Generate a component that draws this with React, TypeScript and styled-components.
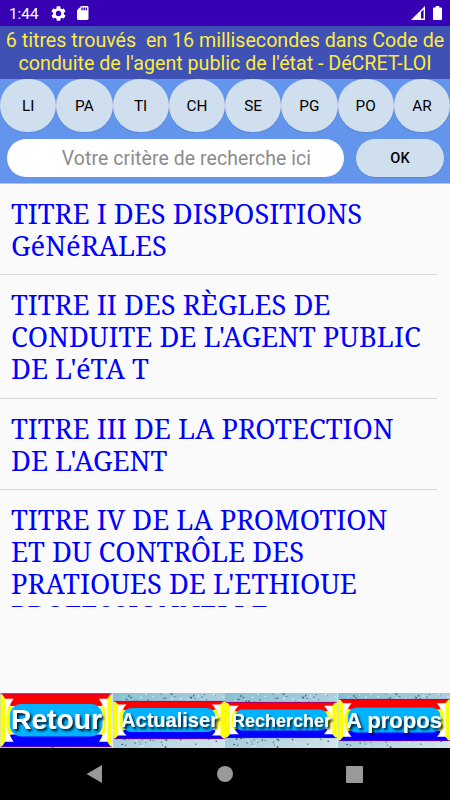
import React from 'react';
import styled, { createGlobalStyle } from 'styled-components';

const Global = createGlobalStyle`
  * { box-sizing: border-box; }
  body { margin: 0; background: #fafafa; }
`;

const Screen = styled.div`
  width: 450px;
  height: 800px;
  display: flex;
  flex-direction: column;
  overflow: hidden;
  background: #fafafa;
  font-family: Roboto, sans-serif;
`;

const StatusBar = styled.div`
  flex: none;
  height: 26px;
  background: #3700b3;
  color: #fff;
  display: flex;
  align-items: center;
  padding: 0 8px 0 9px;
  font-size: 15.3px;
  svg { display: block; }
`;
const Clock = styled.span`
  width: 42px;
  line-height: 18px;
  padding-top: 1px;
`;
const StatusIcons = styled.div<{ $gap: number; $end?: boolean }>`
  display: flex;
  align-items: center;
  gap: ${(p) => p.$gap}px;
  margin-left: ${(p) => (p.$end ? 'auto' : '0')};
`;

const Banner = styled.header`
  flex: none;
  height: 53px;
  overflow: hidden;
  background: #3f51b5;
  color: #ffeb3b;
  padding-top: 3px;
  font-size: 19.65px;
  line-height: 23px;
  text-align: center;
  white-space: pre;
`;

const Controls = styled.section`
  flex: none;
  height: 105px;
  background: #6495ed;
  border-bottom: 1px solid #a9c4f4;
`;
const Filters = styled.div`
  display: grid;
  grid-template-columns: repeat(8, 56.25px);
  height: 53px;
`;
const Pill = styled.button`
  border: 0;
  padding: 0;
  background: #d0dfee;
  color: #000;
  border-radius: 27px;
  font: 500 14.6px Roboto, sans-serif;
  box-shadow: 0 1px 1px rgba(40, 70, 130, 0.18);
`;
const FilterPill = styled(Pill)`
  height: 52.5px;
  padding-top: 1px;
  font-weight: 400;
  font-size: 15.3px;
`;
const SearchRow = styled.div`
  display: flex;
  padding: 7px 6px 0 7px;
  gap: 12px;
`;
const SearchInput = styled.input`
  width: 337px;
  height: 38px;
  border: 0;
  border-radius: 19px;
  outline: 0;
  background: #fff;
  padding: 1px 0 0 22px;
  text-align: center;
  font: 400 19.4px Roboto, sans-serif;
  letter-spacing: 0.11px;
  &::placeholder { color: #8b8b8b; opacity: 1; }
`;
const OkButton = styled(Pill)`
  width: 88px;
  height: 38px;
`;

const Results = styled.ul`
  flex: none;
  height: 423px;
  margin: 0;
  padding: 0;
  list-style: none;
  overflow: hidden;
`;
const Result = styled.li<{ $height: number }>`
  width: 437px;
  height: ${(p) => p.$height}px;
  padding: 13.5px 0 0 11px;
  border-bottom: 1.5px solid #d7d7d7;
  color: #0000ff;
  font-family: 'Noto Serif', 'DejaVu Serif Condensed', 'DejaVu Serif', serif;
  font-stretch: condensed;
  font-size: 27.36px;
  line-height: 32px;
  white-space: pre;
`;

const Spacer = styled.div`
  flex: 1;
`;
const Actions = styled.nav`
  flex: none;
  display: grid;
  grid-template-columns: repeat(4, 112.5px);
  height: 55px;
`;
const Action = styled.button`
  border: 0;
  padding: 0;
  background: none;
  svg { display: block; }
`;
const SystemNav = styled.footer`
  flex: none;
  height: 52px;
  background: #000;
  display: flex;
  justify-content: space-between;
  align-items: center;
  padding: 0 87px 0 86px;
`;

const results = [
  { height: 91, lines: ['TITRE I DES DISPOSITIONS', 'GéNéRALES'] },
  { height: 124, lines: ['TITRE II DES RÈGLES DE', "CONDUITE DE L'AGENT PUBLIC", "DE L'éTA T"] },
  { height: 91, lines: ['TITRE III DE LA PROTECTION', "DE L'AGENT"] },
  { height: 150, lines: ['TITRE IV DE LA PROMOTION', 'ET DU CONTRÔLE DES', "PRATIOUES DE L'ETHIOUE", 'PROFESSIONNELLE'] },
];

const noise = (n: number) => {
  const v = Math.sin(n * 127.1 + 11.7) * 43758.5453;
  return v - Math.floor(v);
};
const specks = Array.from({ length: 210 }, (_, i) => ({
  x: noise(i) * 112,
  y: noise(i + 500) * 55,
  r: 0.35 + noise(i + 900) * 0.5,
  dark: i % 5 < 3,
}));

interface FrameProps {
  label: string;
  top: number;
  bottom: number;
  band: number;
  size: number;
  baseline: number;
  width: number;
  x: number;
}

function FrameButton({ label, top, bottom, band, size, baseline, width, x }: FrameProps) {
  const id = label.replace(' ', '');
  const l = 0.6;
  const r = 111.9;
  const it = top + band;
  const ib = bottom - band;
  const edge = band * 0.5;
  return (
    <Action aria-label={label}>
      <svg width="112.5" height="55" viewBox="0 0 112.5 55">
        <defs>
          <linearGradient id={`w${id}`} x1="0" y1="0" x2="1" y2="1">
            <stop offset="0" stopColor="#86bfd0" />
            <stop offset="0.5" stopColor="#a9cddd" />
            <stop offset="1" stopColor="#d3e5e8" />
          </linearGradient>
          <filter id={`s${id}`} x="-10%" y="-20%" width="125%" height="160%">
            <feDropShadow dx="2" dy="2.2" stdDeviation="1.1" floodColor="#001428" floodOpacity="0.95" />
          </filter>
        </defs>
        <rect width="112.5" height="55" fill={`url(#w${id})`} />
        {specks.map((s, i) => (
          <ellipse key={i} cx={s.x} cy={s.y} rx={s.r * 1.3} ry={s.r} fill={s.dark ? '#1f3f4c' : '#f2fafa'} opacity="0.75" />
        ))}
        <rect x={l} y={top} width={r - l} height={bottom - top} fill="#fff" />
        <path d={`M${l} ${top}L${l + 4.5} ${top + edge}V${bottom - edge}L${l} ${bottom}ZM${r} ${top}L${r - 4.5} ${top + edge}V${bottom - edge}L${r} ${bottom}Z`} fill="#ffff00" />
        <path d={`M${l + 1} ${top}H${r - 1}L${r - 4.5} ${top + edge}H${r - 13}Q${r - 10} ${it - 1} ${r - 9} ${it + 2}H${l + 9}Q${l + 10} ${it - 1} ${l + 13} ${top + edge}H${l + 4.5}Z`} fill="#ff0000" />
        <path d={`M${l + 1} ${bottom}H${r - 1}L${r - 4.5} ${bottom - edge}H${r - 13}Q${r - 10} ${ib + 1} ${r - 9} ${ib - 2}H${l + 9}Q${l + 10} ${ib + 1} ${l + 13} ${bottom - edge}H${l + 4.5}Z`} fill="#0000ff" />
        <path d={`M${l} ${top + 0.4}H${r}M${l} ${bottom - 0.4}H${r}`} stroke="#8000a0" strokeWidth="0.7" />
        <path d={`M11 ${it + 2}C7 ${it + 6} 7 ${ib - 6} 11 ${ib - 2}M101.5 ${it + 2}C105.5 ${it + 6} 105.5 ${ib - 6} 101.5 ${ib - 2}`} fill="none" stroke="#ffff00" strokeWidth="3.5" />
        <rect x="9.8" y={it} width="92.7" height={ib - it} rx={Math.min(12, (ib - it) / 2.8)} fill="#00b2ff" />
        <text
          x={x}
          y={baseline}
          textLength={width}
          lengthAdjust="spacingAndGlyphs"
          fontFamily="'Liberation Sans', Arial, sans-serif"
          fontWeight="700"
          fontSize={size}
          fill="#fff"
          filter={`url(#s${id})`}
        >
          {label}
        </text>
      </svg>
    </Action>
  );
}

export default function App() {
  return (
    <>
      <Global />
      <Screen>
        <StatusBar>
          <Clock>1:44</Clock>
          <StatusIcons $gap={11}>
            <svg width="15" height="15" viewBox="2 2 20 20" fill="#fff">
              <path d="M19.14 12.94c.04-.3.06-.61.06-.94 0-.32-.02-.64-.07-.94l2.03-1.58a.49.49 0 0 0 .12-.61l-1.92-3.32a.49.49 0 0 0-.59-.22l-2.39.96a7 7 0 0 0-1.62-.94l-.36-2.54a.48.48 0 0 0-.48-.41h-3.84a.48.48 0 0 0-.47.41l-.36 2.54a7.2 7.2 0 0 0-1.62.94l-2.39-.96a.49.49 0 0 0-.59.22L2.74 8.87a.48.48 0 0 0 .12.61l2.03 1.58a6.6 6.6 0 0 0 0 1.88l-2.03 1.58a.49.49 0 0 0-.12.61l1.92 3.32c.12.22.37.29.59.22l2.39-.96c.5.38 1.03.7 1.62.94l.36 2.54c.05.24.24.41.48.41h3.84c.24 0 .44-.17.47-.41l.36-2.54a7 7 0 0 0 1.62-.94l2.39.96c.22.08.47 0 .59-.22l1.92-3.32a.48.48 0 0 0-.12-.61zM12 15.6A3.6 3.6 0 1 1 12 8.4a3.6 3.6 0 0 1 0 7.2z" />
            </svg>
            <svg width="11.5" height="14" viewBox="4 2 16 20" preserveAspectRatio="none" fill="#fff">
              <path d="M18 2h-8L4.02 8 4 20c0 1.1.9 2 2 2h12c1.1 0 2-.9 2-2V4c0-1.1-.9-2-2-2zm-6 6h-2V4h2v4zm3 0h-2V4h2v4zm3 0h-2V4h2v4z" />
            </svg>
          </StatusIcons>
          <StatusIcons $gap={8} $end>
            <svg width="14" height="14" viewBox="0 0 14 14">
              <path d="M0 14L14 0V14Z" fill="#fff" />
              <path d="M10 6L12.6 3.4V12.5H10Z" fill="#3700b3" />
            </svg>
            <svg width="9" height="14" viewBox="0 0 9 14">
              <path d="M2.7 0H6.3V1.4H8Q9 1.4 9 2.4V13Q9 14 8 14H1Q0 14 0 13V2.4Q0 1.4 1 1.4H2.7Z" fill="#fff" />
            </svg>
          </StatusIcons>
        </StatusBar>

        <Banner>
          <div>{'6 titres trouvés  en 16 millisecondes dans Code de'}</div>
          <div>conduite de l'agent public de l'état - DéCRET-LOI</div>
        </Banner>

        <Controls>
          <Filters>
            {['LI', 'PA', 'TI', 'CH', 'SE', 'PG', 'PO', 'AR'].map((f) => (
              <FilterPill key={f}>{f}</FilterPill>
            ))}
          </Filters>
          <SearchRow>
            <SearchInput placeholder="Votre critère de recherche ici" />
            <OkButton>OK</OkButton>
          </SearchRow>
        </Controls>

        <Results>
          {results.map((r) => (
            <Result key={r.lines[0]} $height={r.height}>
              {r.lines.map((text) => (
                <div key={text}>{text}</div>
              ))}
            </Result>
          ))}
        </Results>
        <Spacer />

        <Actions>
          <FrameButton label="Retour" top={0.5} bottom={54} band={10.5} size={27.5} baseline={36} width={91} x={11} />
          <FrameButton label="Actualiser" top={8} bottom={46} band={7} size={20.5} baseline={34} width={97} x={8} />
          <FrameButton label="Rechercher" top={9} bottom={45} band={7.5} size={18.5} baseline={33.5} width={99} x={7} />
          <FrameButton label="A propos" top={6} bottom={48} band={8.5} size={22.5} baseline={35} width={96} x={8} />
        </Actions>

        <SystemNav>
          <svg width="17" height="18" viewBox="0 0 17 18"><path d="M.5 9L16 0V18Z" fill="#999" /></svg>
          <svg width="16" height="16" viewBox="0 0 16 16"><circle cx="8" cy="8" r="8" fill="#999" /></svg>
          <svg width="17" height="17" viewBox="0 0 17 17"><rect width="17" height="17" rx="1" fill="#999" /></svg>
        </SystemNav>
      </Screen>
    </>
  );
}
